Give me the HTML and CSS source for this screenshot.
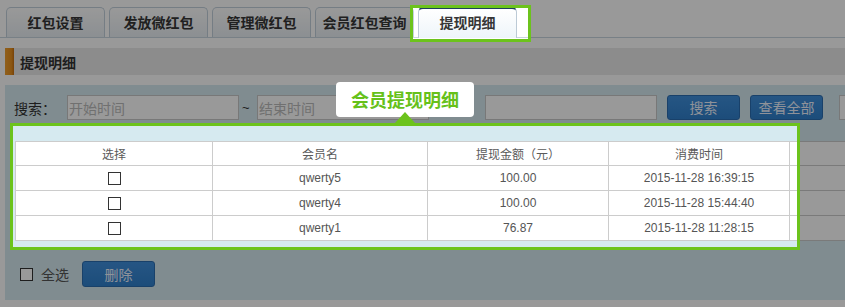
FILE: index.html
```html
<!DOCTYPE html>
<html lang="zh-CN">
<head>
<meta charset="utf-8">
<title>提现明细</title>
<link rel="stylesheet" href="styles.css">
</head>
<body>
<div class="page">
  <div class="tabs">
    <div class="tab">红包设置</div>
    <div class="tab">发放微红包</div>
    <div class="tab">管理微红包</div>
    <div class="tab">会员红包查询</div>
    <div class="tab active">提现明细</div>
  </div>
  <div class="titlebar"><span class="accent"></span><span class="title">提现明细</span></div>
  <div class="content">
    <div class="search">
      <span class="label">搜索：</span>
      <input class="field" placeholder="开始时间">
      <span class="tilde">~</span>
      <input class="field" placeholder="结束时间">
      <input class="field wide-gap">
      <button class="btn first">搜索</button>
      <button class="btn">查看全部</button>
      <input class="field extra">
    </div>
    <div class="grid">
      <div class="cell head">选择</div>
      <div class="cell head">会员名</div>
      <div class="cell head">提现金额（元）</div>
      <div class="cell head">消费时间</div>
      <div class="cell head"></div>

      <div class="cell"><span class="box"></span></div>
      <div class="cell">qwerty5</div>
      <div class="cell">100.00</div>
      <div class="cell">2015-11-28 16:39:15</div>
      <div class="cell"></div>

      <div class="cell"><span class="box"></span></div>
      <div class="cell">qwerty4</div>
      <div class="cell">100.00</div>
      <div class="cell">2015-11-28 15:44:40</div>
      <div class="cell"></div>

      <div class="cell"><span class="box"></span></div>
      <div class="cell">qwerty1</div>
      <div class="cell">76.87</div>
      <div class="cell">2015-11-28 11:28:15</div>
      <div class="cell"></div>
    </div>
    <div class="footer">
      <span class="box all"></span>
      <span class="all-label">全选</span>
      <button class="btn del">删除</button>
    </div>
  </div>
</div>
<div class="overlay"></div>
<div class="frame frame-tab"></div>
<div class="frame frame-table"></div>
<div class="tip">会员提现明细</div>
<div class="arrow"></div>
</body>
</html>
```
FILE: styles.css
```css
html, body {
  margin: 0;
  padding: 0;
  overflow: hidden;
  background: #fff;
}
body {
  font-family: "Noto Sans CJK SC", "Liberation Sans", sans-serif;
  color: #333;
  width: 845px;
  height: 307px;
  position: relative;
}
.page {
  width: 845px;
  overflow: hidden;
}
.tabs {
  display: flex;
  gap: 4px;
  padding: 7px 0 0 6px;
  height: 30px;
  border-bottom: 1px solid #c9d5e0;
}
.tab {
  box-sizing: border-box;
  width: 99px;
  height: 30px;
  flex-shrink: 0;
  border: 1px solid #c3d1dd;
  border-bottom: none;
  border-radius: 5px 5px 0 0;
  background: linear-gradient(#ffffff, #e9eff4);
  font-size: 14px;
  font-weight: bold;
  line-height: 28px;
  text-align: center;
  color: #363636;
}
.tab.active {
  height: 31px;
  margin-bottom: -1px;
  border-top: 2px solid #1d3d5e;
  border-color: #1d3d5e #bccad6 #bccad6;
  background: linear-gradient(#ffffff, #eef5fa);
  line-height: 27px;
}
.titlebar {
  display: flex;
  align-items: center;
  margin: 10px 0 0 5px;
  height: 27px;
  background: #e9e9e9;
}
.accent {
  width: 9px;
  height: 27px;
  background: linear-gradient(90deg, #f0a030, #e8901c 70%, #c87010);
}
.title {
  margin-left: 6px;
  font-size: 14px;
  font-weight: bold;
  color: #333;
}
.content {
  margin: 10px 0 0 5px;
  padding: 10px 0 13px 9px;
  background: #d6eaf0;
  overflow: hidden;
}
.search {
  display: flex;
  align-items: center;
  height: 25px;
  white-space: nowrap;
}
.search > * {
  flex-shrink: 0;
}
.label {
  font-size: 14px;
  color: #333;
  width: 53px;
}
.field {
  box-sizing: border-box;
  width: 172px;
  height: 25px;
  margin: 0;
  padding: 0 0 0 1px;
  border: 1px solid #c8c8c8;
  background: #fff;
  font-family: "Noto Sans CJK SC", sans-serif;
  font-size: 14px;
  outline: none;
}
.field::placeholder {
  color: #bbb;
}
.tilde {
  width: 15px;
  padding-left: 3px;
  font-family: "Liberation Sans", sans-serif;
  font-size: 13px;
  color: #333;
}
.wide-gap {
  margin-left: 56px;
}
.btn {
  box-sizing: border-box;
  width: 73px;
  height: 25px;
  margin: 0 0 0 10px;
  padding: 0;
  border: 1px solid #2b6db1;
  border-radius: 3px;
  background: linear-gradient(#3f8fdc, #3080cc);
  color: #eef4ff;
  font-family: "Noto Sans CJK SC", sans-serif;
  font-size: 14px;
  line-height: 23px;
}
.extra {
  margin-left: 16px;
  width: 100px;
}
.grid {
  display: grid;
  grid-template-columns: 197px 215px 181px 181px 226px;
  grid-template-rows: 24px 25px 25px 25px;
  width: max-content;
  margin: 21px 0 0 1px;
  border-left: 1px solid #cccccc;
  border-top: 1px solid #cccccc;
  background: #fff;
}
.cell {
  box-sizing: border-box;
  display: flex;
  align-items: center;
  justify-content: center;
  border-right: 1px solid #cccccc;
  border-bottom: 1px solid #cccccc;
  font-family: "Liberation Sans", "Noto Sans CJK SC", sans-serif;
  font-size: 12px;
  color: #555;
}
.cell.head {
  color: #5a5a5a;
  font-family: "Noto Sans CJK SC", sans-serif;
}
.box {
  display: inline-block;
  box-sizing: border-box;
  width: 13px;
  height: 13px;
  border: 1px solid #333;
  background: #fff;
}
.footer {
  display: flex;
  align-items: center;
  height: 26px;
  margin-top: 20px;
}
.all {
  margin-left: 6px;
}
.all-label {
  margin-left: 8px;
  font-size: 14px;
  color: #555;
}
.btn.del {
  height: 26px;
  margin-left: 13px;
  line-height: 24px;
}
.overlay {
  position: absolute;
  left: 0;
  top: 0;
  width: 845px;
  height: 307px;
  background: rgba(0, 0, 0, 0.4);
  z-index: 10;
  clip-path: polygon(evenodd,
    0 0, 845px 0, 845px 307px, 0 307px, 0 0,
    410px 5px, 531px 5px, 531px 42px, 410px 42px, 410px 5px, 0 0,
    10px 123px, 800px 123px, 800px 250px, 10px 250px, 10px 123px, 0 0);
}
.frame {
  position: absolute;
  box-sizing: border-box;
  border: 3px solid #6cc31c;
  z-index: 11;
}
.frame-tab {
  left: 410px;
  top: 5px;
  width: 121px;
  height: 37px;
}
.frame-table {
  left: 10px;
  top: 123px;
  width: 790px;
  height: 127px;
}
.tip {
  position: absolute;
  left: 336px;
  top: 82px;
  width: 138px;
  height: 35px;
  border-radius: 4px;
  background: #fff;
  color: #66c11a;
  font-size: 18px;
  font-weight: bold;
  line-height: 35px;
  text-align: center;
  z-index: 12;
}
.arrow {
  position: absolute;
  left: 395px;
  top: 112px;
  width: 0;
  height: 0;
  border-left: 10px solid transparent;
  border-right: 10px solid transparent;
  border-bottom: 11px solid #6cc31c;
  z-index: 13;
}
```
